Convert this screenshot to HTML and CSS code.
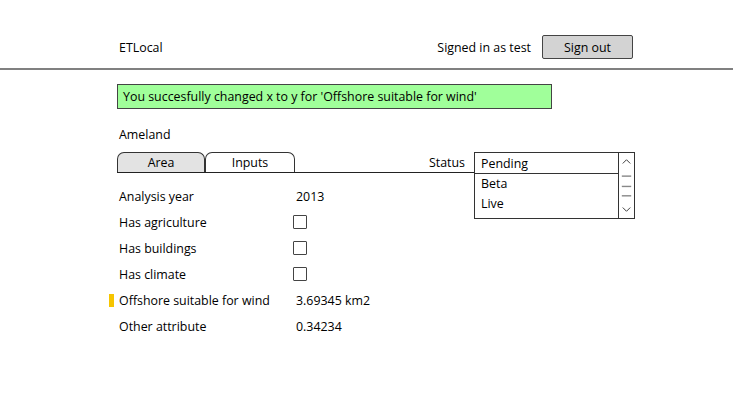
FILE: index.html
```html
<!DOCTYPE html>
<html>
<head>
<meta charset="utf-8">
<link rel="stylesheet" href="styles.css">
</head>
<body>
<header class="topbar">
  <div class="brand">ETLocal</div>
  <div class="account">
    <span class="signed">Signed in as test</span>
    <button class="signout">Sign out</button>
  </div>
</header>
<main class="content">
  <div class="alert">You succesfully changed x to y for 'Offshore suitable for wind'</div>
  <div class="region">Ameland</div>
  <div class="panel">
    <div class="tabrow">
      <div class="tabs">
        <div class="tab active">Area</div>
        <div class="tab">Inputs</div>
      </div>
      <div class="status-label">Status</div>
    </div>
    <div class="listbox">
      <div class="options">
        <div class="opt selected">Pending</div>
        <div class="opt">Beta</div>
        <div class="opt">Live</div>
      </div>
      <div class="scrollbar">
        <svg width="16" height="65" viewBox="0 0 16 65">
          <path d="M4 9 L8 5 L12 9" fill="none" stroke="#333" stroke-width="1"/>
          <line x1="3" y1="22.5" x2="13" y2="22.5" stroke="#888" stroke-width="1.5"/>
          <line x1="3" y1="33.5" x2="13" y2="33.5" stroke="#888" stroke-width="1.5"/>
          <line x1="3" y1="43.5" x2="13" y2="43.5" stroke="#888" stroke-width="1.5"/>
          <path d="M4 56 L8 60 L12 56" fill="none" stroke="#333" stroke-width="1"/>
        </svg>
      </div>
    </div>
    <div class="form">
      <div class="row"><span class="mark"></span><span class="label">Analysis year</span><span class="value">2013</span></div>
      <div class="row"><span class="mark"></span><span class="label">Has agriculture</span><span class="value"><span class="checkbox"></span></span></div>
      <div class="row"><span class="mark"></span><span class="label">Has buildings</span><span class="value"><span class="checkbox"></span></span></div>
      <div class="row"><span class="mark"></span><span class="label">Has climate</span><span class="value"><span class="checkbox"></span></span></div>
      <div class="row"><span class="mark changed"></span><span class="label">Offshore suitable for wind</span><span class="value">3.69345 km2</span></div>
      <div class="row"><span class="mark"></span><span class="label">Other attribute</span><span class="value">0.34234</span></div>
    </div>
  </div>
</main>
</body>
</html>
```

FILE: styles.css
```css
* { box-sizing: border-box; }
body {
  margin: 0;
  background: #fff;
  color: #000;
  font-family: "Comic Sans MS", "Open Sans", "DejaVu Sans", sans-serif;
  font-size: 12.4px;
}
.topbar {
  display: flex;
  justify-content: space-between;
  align-items: center;
  padding: 35px 100px 9px 119px;
  height: 70px;
  border-bottom: 2px solid #808080;
}
.account { display: flex; align-items: center; gap: 11px; }
.signout {
  width: 91px;
  height: 24px;
  background: #d3d3d3;
  border: 1.5px solid #444;
  border-radius: 2px;
  font: inherit;
  color: #000;
  padding: 0;
}
.content { padding: 14px 0 0 117px; }
.alert {
  width: 435px;
  height: 25px;
  background: #a0ff9a;
  border: 1.5px solid #444;
  display: flex;
  align-items: center;
  padding-left: 5px;
}
.region { margin-top: 19px; padding-left: 2px; height: 14px; line-height: 14px; }
.panel {
  margin-top: 10px;
  display: grid;
  grid-template-columns: 357px 161px;
  grid-template-rows: 21px auto;
}
.tabrow {
  grid-column: 1;
  grid-row: 1;
  display: flex;
  justify-content: space-between;
  align-items: flex-end;
  border-bottom: 1px solid #222;
}
.tabs { display: flex; align-items: flex-end; }
.tab {
  height: 20px;
  border: 1px solid #333;
  border-bottom: none;
  border-radius: 7px 7px 0 0;
  display: flex;
  align-items: center;
  justify-content: center;
  width: 90px;
}
.tab.active { width: 88px; background: #e3e3e3; }
.status-label { padding-right: 9px; align-self: center; }
.listbox {
  grid-column: 2;
  grid-row: 1 / span 2;
  align-self: start;
  height: 67px;
  border: 1px solid #333;
  display: flex;
}
.options { flex: 1; }
.opt { height: 20px; line-height: 20px; padding-left: 6px; }
.opt.selected { height: 21px; line-height: 22px; border-bottom: 1px solid #333; }
.scrollbar { width: 16px; border-left: 1px solid #333; display: flex; }
.form {
  grid-column: 1;
  grid-row: 2;
  margin-left: -8px;
  padding-top: 10px;
}
.row {
  display: grid;
  grid-template-columns: 10px 177px auto;
  align-items: center;
  height: 26px;
}
.mark { width: 5px; height: 13px; }
.mark.changed { background: #f6c500; }
.checkbox {
  display: block;
  width: 14px;
  height: 14px;
  border: 1.5px solid #444;
  border-radius: 1px;
  margin-left: -3px;
}
```
